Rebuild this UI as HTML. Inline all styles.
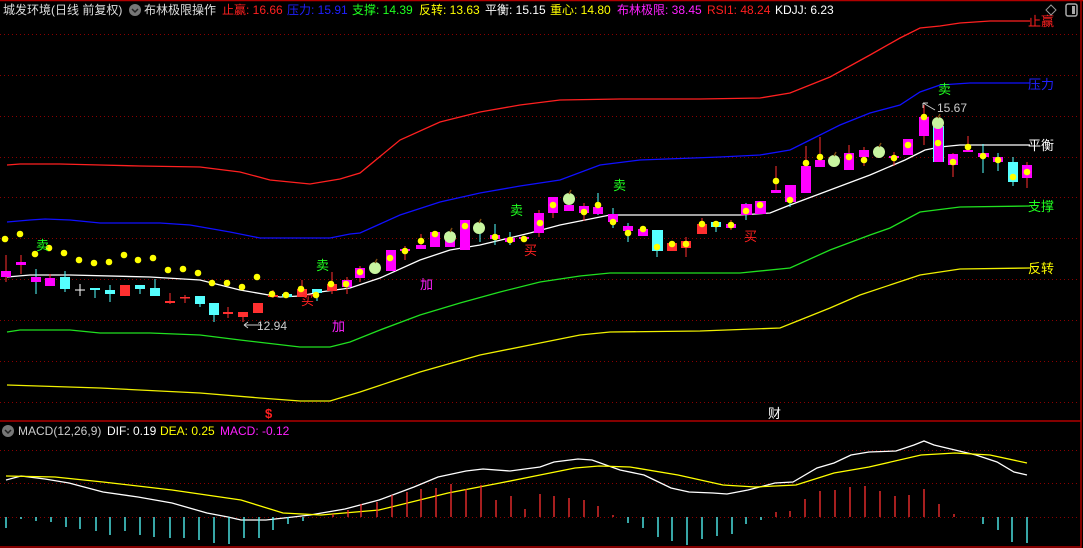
<!DOCTYPE html>
<html><head><meta charset="utf-8"><style>
html,body{margin:0;padding:0;background:#000;width:1083px;height:548px;overflow:hidden}
svg{position:absolute;left:0;top:0}
.t{position:absolute;font-family:"Liberation Sans","Noto Sans CJK SC",sans-serif;font-size:13px;line-height:15px;white-space:nowrap}
.h{font-size:12px}
</style></head><body>
<svg width="1083" height="548" viewBox="0 0 1083 548">
<g stroke="#8a0000" stroke-width="1" stroke-dasharray="1,3" fill="none">
<line x1="0" y1="34.5" x2="1080" y2="34.5"/><line x1="0" y1="75.5" x2="1080" y2="75.5"/><line x1="0" y1="116.5" x2="1080" y2="116.5"/><line x1="0" y1="157.5" x2="1080" y2="157.5"/><line x1="0" y1="197.5" x2="1080" y2="197.5"/><line x1="0" y1="238.5" x2="1080" y2="238.5"/><line x1="0" y1="279.5" x2="1080" y2="279.5"/><line x1="0" y1="320.5" x2="1080" y2="320.5"/><line x1="0" y1="361.5" x2="1080" y2="361.5"/><line x1="0" y1="402.5" x2="1080" y2="402.5"/>
<line x1="0" y1="450.5" x2="1080" y2="450.5"/><line x1="0" y1="483.5" x2="1080" y2="483.5"/><line x1="0" y1="517.5" x2="1080" y2="517.5"/>
</g>
<g stroke="#b00000" stroke-width="1.5" fill="none">
<line x1="0" y1="0.5" x2="1083" y2="0.5"/><line x1="0" y1="421" x2="1081" y2="421"/><line x1="0" y1="547" x2="1081" y2="547"/><line x1="1081" y1="0" x2="1081" y2="548"/>
</g>
<g fill="none" stroke-width="1.3">
<polyline stroke="#ff2020" points="7,165 20,164 60,164 100,165 140,166 200,167 240,172 270,180 310,184 340,179 360,173 400,140 440,122 480,112 520,105 560,100 620,99 700,99 760,98 790,93 830,77 870,55 900,38 920,28 940,26 960,23 990,21 1030,21"/>
<polyline stroke="#1010ff" points="7,222 30,220 45,219 70,220 100,223 160,223 190,225 230,232 260,238 330,238 350,234 360,233 400,215 440,202 480,193 520,186 560,180 600,165 640,160 720,157 760,155 790,150 810,140 840,125 870,113 900,105 920,92 940,85 970,83 1030,83"/>
<polyline stroke="#ffffff" points="7,277 30,275 70,275 150,277 200,280 240,290 280,297 300,296 320,292 350,288 380,278 420,260 450,250 480,245 530,233 560,225 590,219 610,215 740,215 770,213 790,205 830,190 870,175 905,160 925,150 940,147 960,145 1030,145"/>
<polyline stroke="#20e020" points="7,332 20,330 70,330 100,333 150,333 200,335 240,340 300,347 330,347 350,342 380,330 420,315 460,303 500,292 540,282 580,276 610,273 740,273 790,268 830,250 870,235 890,228 920,212 960,207 1030,206"/>
<polyline stroke="#f0f000" points="7,385 100,388 200,393 260,398 300,401 330,401 360,392 420,372 480,355 540,343 580,335 610,332 700,331 780,328 800,320 830,308 860,295 920,275 960,269 1030,268"/>
</g>
<g stroke-width="1">
<line x1="6" y1="255" x2="6" y2="282" stroke="#ff3030"/><rect x="1" y="271" width="10" height="6" fill="#ff00ff"/>
<line x1="21" y1="255" x2="21" y2="274" stroke="#ff3030"/><rect x="16" y="262" width="10" height="3" fill="#ff00ff"/>
<line x1="36" y1="269" x2="36" y2="294" stroke="#55ffff"/><rect x="31" y="277" width="10" height="5" fill="#ff00ff"/>
<line x1="50" y1="274" x2="50" y2="286" stroke="#ff3030"/><rect x="45" y="278" width="10" height="8" fill="#ff00ff"/>
<line x1="65" y1="271" x2="65" y2="292" stroke="#55ffff"/><rect x="60" y="277" width="10" height="12" fill="#55ffff"/>
<line x1="80" y1="284" x2="80" y2="296" stroke="#fff"/><line x1="75" y1="290" x2="85" y2="290" stroke="#fff"/>
<line x1="95" y1="288" x2="95" y2="298" stroke="#55ffff"/><rect x="90" y="288" width="10" height="2" fill="#55ffff"/>
<line x1="110" y1="285" x2="110" y2="302" stroke="#55ffff"/><rect x="105" y="290" width="10" height="4" fill="#55ffff"/>
<rect x="120" y="285" width="10" height="11" fill="#ff3030"/>
<line x1="140" y1="285" x2="140" y2="294" stroke="#55ffff"/><rect x="135" y="285" width="10" height="4" fill="#55ffff"/>
<line x1="155" y1="279" x2="155" y2="296" stroke="#55ffff"/><rect x="150" y="288" width="10" height="8" fill="#55ffff"/>
<line x1="170" y1="293" x2="170" y2="304" stroke="#ff3030"/><rect x="165" y="301" width="10" height="2" fill="#ff3030"/>
<line x1="185" y1="295" x2="185" y2="303" stroke="#ff3030"/><rect x="180" y="297" width="10" height="1.5" fill="#ff3030"/>
<line x1="200" y1="296" x2="200" y2="307" stroke="#55ffff"/><rect x="195" y="296" width="10" height="8" fill="#55ffff"/>
<line x1="214" y1="303" x2="214" y2="322" stroke="#55ffff"/><rect x="209" y="303" width="10" height="12" fill="#55ffff"/>
<line x1="228" y1="307" x2="228" y2="318" stroke="#ff3030"/><rect x="223" y="312" width="10" height="2" fill="#ff3030"/>
<line x1="243" y1="312" x2="243" y2="322" stroke="#ff3030"/><rect x="238" y="312" width="10" height="5" fill="#ff3030"/>
<rect x="253" y="303" width="10" height="10" fill="#ff3030"/>
<line x1="273" y1="290" x2="273" y2="298" stroke="#ff3030"/><rect x="268" y="295" width="10" height="2" fill="#ff3030"/>
<rect x="282" y="294" width="10" height="3" fill="#55ffff"/>
<line x1="302" y1="280" x2="302" y2="297" stroke="#ff3030"/><rect x="297" y="289" width="10" height="8" fill="#ff3030"/>
<line x1="317" y1="289" x2="317" y2="301" stroke="#55ffff"/><rect x="312" y="289" width="10" height="4" fill="#55ffff"/>
<line x1="332" y1="272" x2="332" y2="294" stroke="#ff3030"/><rect x="327" y="284" width="10" height="7" fill="#ff3030"/>
<line x1="347" y1="277" x2="347" y2="294" stroke="#ff3030"/><rect x="342" y="280" width="10" height="7" fill="#ff00ff"/>
<line x1="360" y1="266" x2="360" y2="282" stroke="#ff3030"/><rect x="355" y="268" width="10" height="10" fill="#ff00ff"/>
<rect x="386" y="250" width="10" height="21" fill="#ff00ff"/>
<line x1="405" y1="246" x2="405" y2="260" stroke="#ff3030"/><rect x="400" y="249" width="10" height="2" fill="#ff00ff"/>
<line x1="421" y1="234" x2="421" y2="249" stroke="#ff3030"/><rect x="416" y="245" width="10" height="4" fill="#ff00ff"/>
<rect x="430" y="232" width="10" height="15" fill="#ff00ff"/>
<rect x="445" y="233" width="10" height="14" fill="#ff00ff"/>
<rect x="460" y="220" width="10" height="30" fill="#ff00ff"/>
<line x1="480" y1="230" x2="480" y2="242" stroke="#55ffff"/>
<line x1="495" y1="224" x2="495" y2="245" stroke="#55ffff"/><rect x="490" y="235" width="10" height="4" fill="#ff00ff"/>
<line x1="510" y1="232" x2="510" y2="245" stroke="#55ffff"/><rect x="505" y="238" width="10" height="4" fill="#ff00ff"/>
<rect x="519" y="237" width="10" height="2" fill="#ff00ff"/>
<line x1="539" y1="210" x2="539" y2="237" stroke="#ff3030"/><rect x="534" y="213" width="10" height="20" fill="#ff00ff"/>
<line x1="553" y1="197" x2="553" y2="218" stroke="#ff3030"/><rect x="548" y="197" width="10" height="16" fill="#ff00ff"/>
<rect x="564" y="205" width="10" height="6" fill="#ff00ff"/>
<line x1="584" y1="203" x2="584" y2="221" stroke="#ff3030"/><rect x="579" y="206" width="10" height="7" fill="#ff00ff"/>
<line x1="598" y1="193" x2="598" y2="215" stroke="#55ffff"/><rect x="593" y="207" width="10" height="7" fill="#ff00ff"/>
<line x1="613" y1="208" x2="613" y2="228" stroke="#55ffff"/><rect x="608" y="214" width="10" height="8" fill="#ff00ff"/>
<line x1="628" y1="223" x2="628" y2="242" stroke="#55ffff"/><rect x="623" y="226" width="10" height="5" fill="#ff00ff"/>
<rect x="638" y="229" width="10" height="7" fill="#ff00ff"/>
<line x1="657" y1="230" x2="657" y2="257" stroke="#55ffff"/><rect x="652" y="230" width="11" height="21" fill="#55ffff"/>
<rect x="667" y="243" width="10" height="8" fill="#ff3030"/>
<line x1="686" y1="237" x2="686" y2="257" stroke="#ff3030"/><rect x="681" y="241" width="10" height="7" fill="#ff3030"/>
<line x1="702" y1="218" x2="702" y2="234" stroke="#ff3030"/><rect x="697" y="224" width="10" height="10" fill="#ff3030"/>
<line x1="716" y1="222" x2="716" y2="232" stroke="#55ffff"/><rect x="711" y="222" width="10" height="5" fill="#55ffff"/>
<line x1="731" y1="220" x2="731" y2="230" stroke="#ff3030"/><rect x="726" y="224" width="10" height="4" fill="#ff00ff"/>
<line x1="746" y1="203" x2="746" y2="220" stroke="#55ffff"/><rect x="741" y="204" width="11" height="11" fill="#ff00ff"/>
<line x1="760" y1="201" x2="760" y2="214" stroke="#55ffff"/><rect x="755" y="201" width="11" height="13" fill="#ff00ff"/>
<line x1="776" y1="166" x2="776" y2="193" stroke="#ff3030"/><rect x="771" y="190" width="10" height="3" fill="#ff00ff"/>
<line x1="790" y1="185" x2="790" y2="207" stroke="#55ffff"/><rect x="785" y="185" width="11" height="17" fill="#ff00ff"/>
<line x1="806" y1="146" x2="806" y2="193" stroke="#ff3030"/><rect x="801" y="166" width="10" height="27" fill="#ff00ff"/>
<line x1="820" y1="137" x2="820" y2="167" stroke="#ff3030"/><rect x="815" y="160" width="10" height="7" fill="#ff00ff"/>
<line x1="849" y1="145" x2="849" y2="170" stroke="#ff3030"/><rect x="844" y="153" width="10" height="17" fill="#ff00ff"/>
<line x1="864" y1="147" x2="864" y2="166" stroke="#ff3030"/><rect x="859" y="150" width="10" height="7" fill="#ff00ff"/>
<line x1="894" y1="152" x2="894" y2="166" stroke="#ff3030"/><rect x="889" y="156" width="10" height="2" fill="#ff00ff"/>
<rect x="903" y="139" width="10" height="16" fill="#ff00ff"/>
<line x1="924" y1="105" x2="924" y2="145" stroke="#ff3030"/><rect x="919" y="117" width="10" height="19" fill="#ff00ff"/>
<rect x="933" y="126" width="11" height="36" fill="#55ffff"/><rect x="934" y="126" width="9" height="36" fill="#ff00ff"/>
<line x1="953" y1="153" x2="953" y2="177" stroke="#ff3030"/><rect x="948" y="154" width="10" height="11" fill="#ff00ff"/>
<line x1="968" y1="136" x2="968" y2="152" stroke="#ff3030"/><rect x="963" y="150" width="10" height="2" fill="#ff00ff"/>
<line x1="983" y1="144" x2="983" y2="173" stroke="#55ffff"/><rect x="978" y="153" width="11" height="4" fill="#ff00ff"/>
<line x1="998" y1="153" x2="998" y2="171" stroke="#55ffff"/><rect x="993" y="157" width="10" height="5" fill="#ff00ff"/>
<line x1="1013" y1="157" x2="1013" y2="186" stroke="#55ffff"/><rect x="1008" y="162" width="10" height="20" fill="#55ffff"/>
<line x1="1027" y1="162" x2="1027" y2="188" stroke="#ff3030"/><rect x="1022" y="165" width="10" height="13" fill="#ff00ff"/>
</g>
<g fill="#ffff00">
<circle cx="5" cy="239" r="3.3"/><circle cx="20" cy="234" r="3.3"/><circle cx="35" cy="254" r="3.3"/><circle cx="49" cy="248" r="3.3"/><circle cx="64" cy="253" r="3.3"/><circle cx="79" cy="260" r="3.3"/><circle cx="94" cy="263" r="3.3"/><circle cx="109" cy="262" r="3.3"/><circle cx="124" cy="255" r="3.3"/><circle cx="138" cy="260" r="3.3"/><circle cx="153" cy="258" r="3.3"/><circle cx="168" cy="270" r="3.3"/><circle cx="183" cy="269" r="3.3"/><circle cx="198" cy="273" r="3.3"/><circle cx="212" cy="283" r="3.3"/><circle cx="227" cy="283" r="3.3"/><circle cx="242" cy="287" r="3.3"/><circle cx="257" cy="277" r="3.3"/>
<circle cx="272" cy="294" r="3.3"/><circle cx="286" cy="295" r="3.3"/><circle cx="301" cy="289" r="3.3"/><circle cx="316" cy="295" r="3.3"/><circle cx="331" cy="284" r="3.3"/><circle cx="346" cy="284" r="3.3"/><circle cx="360" cy="272" r="3.3"/><circle cx="390" cy="258" r="3.3"/><circle cx="405" cy="251" r="3.3"/><circle cx="421" cy="241" r="3.3"/><circle cx="435" cy="234" r="3.3"/><circle cx="465" cy="226" r="3.3"/><circle cx="495" cy="237" r="3.3"/><circle cx="510" cy="240" r="3.3"/><circle cx="524" cy="239" r="3.3"/><circle cx="540" cy="223" r="3.3"/><circle cx="553" cy="205" r="3.3"/><circle cx="584" cy="212" r="3.3"/><circle cx="598" cy="205" r="3.3"/><circle cx="613" cy="222" r="3.3"/><circle cx="628" cy="233" r="3.3"/><circle cx="643" cy="229" r="3.3"/><circle cx="657" cy="247" r="3.3"/><circle cx="672" cy="244" r="3.3"/><circle cx="686" cy="244" r="3.3"/><circle cx="702" cy="224" r="3.3"/><circle cx="716" cy="224" r="3.3"/><circle cx="731" cy="225" r="3.3"/><circle cx="746" cy="211" r="3.3"/><circle cx="760" cy="205" r="3.3"/><circle cx="776" cy="181" r="3.3"/><circle cx="790" cy="200" r="3.3"/><circle cx="806" cy="163" r="3.3"/><circle cx="820" cy="157" r="3.3"/><circle cx="849" cy="157" r="3.3"/><circle cx="864" cy="160" r="3.3"/><circle cx="894" cy="158" r="3.3"/><circle cx="908" cy="145" r="3.3"/><circle cx="924" cy="117" r="3.3"/><circle cx="938" cy="143" r="3.3"/><circle cx="953" cy="162" r="3.3"/><circle cx="968" cy="147" r="3.3"/><circle cx="983" cy="156" r="3.3"/><circle cx="998" cy="160" r="3.3"/><circle cx="1013" cy="177" r="3.3"/><circle cx="1027" cy="172" r="3.3"/>
</g>
<g>
<g transform="translate(375,268)"><circle r="6" fill="#c8f5a0"/><path d="M0,-5 L2,-9" stroke="#7a4a10" stroke-width="1.5"/></g>
<g transform="translate(450,237)"><circle r="6" fill="#c8f5a0"/><path d="M0,-5 L2,-9" stroke="#7a4a10" stroke-width="1.5"/></g>
<g transform="translate(479,228)"><circle r="6" fill="#c8f5a0"/><path d="M0,-5 L2,-9" stroke="#7a4a10" stroke-width="1.5"/></g>
<g transform="translate(569,199)"><circle r="6" fill="#c8f5a0"/><path d="M0,-5 L2,-9" stroke="#7a4a10" stroke-width="1.5"/></g>
<g transform="translate(834,161)"><circle r="6" fill="#c8f5a0"/><path d="M0,-5 L2,-9" stroke="#7a4a10" stroke-width="1.5"/></g>
<g transform="translate(879,152)"><circle r="6" fill="#c8f5a0"/><path d="M0,-5 L2,-9" stroke="#7a4a10" stroke-width="1.5"/></g>
<g transform="translate(938,123)"><circle r="6" fill="#c8f5a0"/><path d="M0,-5 L2,-9" stroke="#7a4a10" stroke-width="1.5"/></g>
</g>
<g stroke="#ccc" stroke-width="1" fill="none">
<path d="M244,325 H262 M244,325 l4,-3 M244,325 l4,3"/>
<path d="M923,103 L935,110 M923,103 v5 M923,103 h5"/>
</g>
<g fill="none" stroke-width="1.3">
<polyline stroke="#ffffff" points="6,480 21,476 45,479 69,483 103,492 138,497 172,503 207,513 228,517 241,520 266,520 293,517 310,515 345,509 379,500 414,487 438,477 466,471 483,469 510,471 540,467 554,462 578,459 592,460 620,470 644,475 671,488 689,492 713,493 727,494 748,490 775,483 793,482 817,468 834,463 851,455 869,452 896,451 914,445 924,441 934,445 955,450 976,455 997,462 1014,472 1027,475"/>
<polyline stroke="#ffff00" points="6,476 55,477 103,482 172,490 241,500 283,513 321,515 379,510 448,493 500,483 540,475 575,468 599,466 630,467 678,475 723,485 755,487 796,485 834,473 869,467 921,455 955,453 990,455 1027,463"/>
</g>
<g stroke="#55ffff" stroke-width="1.3">
<line x1="6" y1="517" x2="6" y2="528"/><line x1="21" y1="517" x2="21" y2="519"/><line x1="36" y1="517" x2="36" y2="521"/><line x1="51" y1="517" x2="51" y2="522"/><line x1="66" y1="517" x2="66" y2="527"/><line x1="80" y1="517" x2="80" y2="529"/><line x1="96" y1="517" x2="96" y2="531"/><line x1="110" y1="517" x2="110" y2="535"/><line x1="125" y1="517" x2="125" y2="531"/><line x1="140" y1="517" x2="140" y2="535"/><line x1="154" y1="517" x2="154" y2="537"/><line x1="170" y1="517" x2="170" y2="538"/><line x1="184" y1="517" x2="184" y2="538"/><line x1="199" y1="517" x2="199" y2="540"/><line x1="214" y1="517" x2="214" y2="543"/><line x1="229" y1="517" x2="229" y2="544"/><line x1="244" y1="517" x2="244" y2="538"/><line x1="259" y1="517" x2="259" y2="538"/><line x1="273" y1="517" x2="273" y2="530"/><line x1="288" y1="517" x2="288" y2="524"/><line x1="303" y1="517" x2="303" y2="521"/>
<line x1="628" y1="517" x2="628" y2="523"/><line x1="643" y1="517" x2="643" y2="528"/><line x1="658" y1="517" x2="658" y2="537"/><line x1="672" y1="517" x2="672" y2="541"/><line x1="687" y1="517" x2="687" y2="545"/><line x1="702" y1="517" x2="702" y2="539"/><line x1="717" y1="517" x2="717" y2="536"/><line x1="732" y1="517" x2="732" y2="534"/><line x1="746" y1="517" x2="746" y2="524"/><line x1="761" y1="517" x2="761" y2="520"/>
<line x1="983" y1="517" x2="983" y2="524"/><line x1="998" y1="517" x2="998" y2="530"/><line x1="1012" y1="517" x2="1012" y2="542"/><line x1="1027" y1="517" x2="1027" y2="543"/>
</g>
<g stroke="#ff3030" stroke-width="1.3">
<line x1="333" y1="517" x2="333" y2="514"/><line x1="348" y1="517" x2="348" y2="510"/><line x1="361" y1="517" x2="361" y2="504"/><line x1="377" y1="517" x2="377" y2="502"/><line x1="392" y1="517" x2="392" y2="495"/><line x1="407" y1="517" x2="407" y2="492"/><line x1="421" y1="517" x2="421" y2="489"/><line x1="436" y1="517" x2="436" y2="488"/><line x1="451" y1="517" x2="451" y2="484"/><line x1="466" y1="517" x2="466" y2="489"/><line x1="481" y1="517" x2="481" y2="485"/><line x1="496" y1="517" x2="496" y2="500"/><line x1="511" y1="517" x2="511" y2="496"/><line x1="525" y1="517" x2="525" y2="509"/><line x1="540" y1="517" x2="540" y2="494"/><line x1="554" y1="517" x2="554" y2="496"/><line x1="569" y1="517" x2="569" y2="498"/><line x1="584" y1="517" x2="584" y2="500"/><line x1="598" y1="517" x2="598" y2="506"/><line x1="613" y1="517" x2="613" y2="515"/>
<line x1="776" y1="517" x2="776" y2="512"/><line x1="790" y1="517" x2="790" y2="511"/><line x1="805" y1="517" x2="805" y2="499"/><line x1="820" y1="517" x2="820" y2="491"/><line x1="835" y1="517" x2="835" y2="490"/><line x1="850" y1="517" x2="850" y2="487"/><line x1="865" y1="517" x2="865" y2="486"/><line x1="880" y1="517" x2="880" y2="491"/><line x1="895" y1="517" x2="895" y2="496"/><line x1="909" y1="517" x2="909" y2="495"/><line x1="924" y1="517" x2="924" y2="489"/><line x1="939" y1="517" x2="939" y2="504"/><line x1="954" y1="517" x2="954" y2="514"/>
</g>
<circle cx="135" cy="10" r="6" fill="#777"/><path d="M132,9 l3,3 l3,-3" stroke="#222" fill="none" stroke-width="1.5"/>
<circle cx="8" cy="431" r="6" fill="#777"/><path d="M5,430 l3,3 l3,-3" stroke="#222" fill="none" stroke-width="1.5"/>
<path d="M1051,5 l5,5 l-5,5 l-5,-5 z" stroke="#999" fill="none"/>
<rect x="1066" y="4" width="11" height="12" rx="2" stroke="#aaa" fill="none" stroke-width="1.5"/><rect x="1072" y="6" width="3" height="8" fill="#aaa"/>
</svg>
<div class="t h" style="left:3px;top:3px;color:#ddd">城发环境(日线 前复权)</div>
<div class="t h" style="left:144px;top:3px;color:#ddd">布林极限操作</div>
<div class="t h" style="left:222px;top:3px;color:#ff2020">止赢: 16.66</div>
<div class="t h" style="left:287px;top:3px;color:#2020ff">压力: 15.91</div>
<div class="t h" style="left:352px;top:3px;color:#20ff20">支撑: 14.39</div>
<div class="t h" style="left:419px;top:3px;color:#ffff00">反转: 13.63</div>
<div class="t h" style="left:485px;top:3px;color:#fff">平衡: 15.15</div>
<div class="t h" style="left:550px;top:3px;color:#ffff00">重心: 14.80</div>
<div class="t h" style="left:617px;top:3px;color:#ff20ff">布林极限: 38.45</div>
<div class="t h" style="left:707px;top:3px;color:#ff2020">RSI1: 48.24</div>
<div class="t h" style="left:775px;top:3px;color:#fff">KDJJ: 6.23</div>
<div class="t h" style="left:18px;top:424px;color:#ccc">MACD(12,26,9)</div>
<div class="t h" style="left:107px;top:424px;color:#fff">DIF: 0.19</div>
<div class="t h" style="left:160px;top:424px;color:#ffff00">DEA: 0.25</div>
<div class="t h" style="left:220px;top:424px;color:#ff20ff">MACD: -0.12</div>
<div class="t" style="left:1028px;top:14px;color:#ff2020">止赢</div>
<div class="t" style="left:1028px;top:77px;color:#2020ff">压力</div>
<div class="t" style="left:1028px;top:138px;color:#fff">平衡</div>
<div class="t" style="left:1028px;top:199px;color:#20ff20">支撑</div>
<div class="t" style="left:1028px;top:261px;color:#ffff00">反转</div>
<div class="t" style="left:36px;top:238px;color:#20ff20">卖</div>
<div class="t" style="left:316px;top:258px;color:#20ff20">卖</div>
<div class="t" style="left:510px;top:203px;color:#20ff20">卖</div>
<div class="t" style="left:613px;top:178px;color:#20ff20">卖</div>
<div class="t" style="left:938px;top:82px;color:#20ff20">卖</div>
<div class="t" style="left:301px;top:293px;color:#ff2020">买</div>
<div class="t" style="left:524px;top:243px;color:#ff2020">买</div>
<div class="t" style="left:744px;top:229px;color:#ff2020">买</div>
<div class="t" style="left:420px;top:277px;color:#ff20ff">加</div>
<div class="t" style="left:332px;top:319px;color:#ff20ff">加</div>
<div class="t" style="left:257px;top:319px;color:#ccc;font-size:12px">12.94</div>
<div class="t" style="left:937px;top:101px;color:#ccc;font-size:12px">15.67</div>
<div class="t" style="left:265px;top:406px;color:#ff2020;font-weight:bold">$</div>
<div class="t" style="left:768px;top:406px;color:#fff">财</div>
</body></html>
